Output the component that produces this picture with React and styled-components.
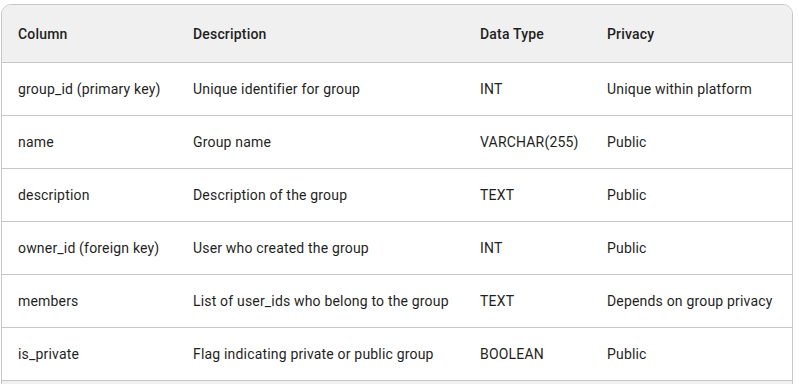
import React from 'react';
import styled, { createGlobalStyle } from 'styled-components';

const GlobalStyle = createGlobalStyle`
  body {
    margin: 0;
    background: #ffffff;
    font-family: Roboto, "Liberation Sans", sans-serif;
    overflow: hidden;
  }
`;

const Wrapper = styled.div`
  padding: 4px 6px 0 1px;
`;

const Frame = styled.div`
  border: 1px solid #c7c7c7;
  border-radius: 10px;
  overflow: hidden;
`;

const Table = styled.table`
  width: 100%;
  border-collapse: collapse;
  table-layout: fixed;
  font-size: 14px;
  letter-spacing: 0.18px;
  color: #1f1f1f;
`;

const Col = styled.col`
  width: ${(p) => p.$w}px;
`;

const HeadCell = styled.th`
  text-align: left;
  font-weight: 500;
  background: #f0f0f0;
  height: 57px;
  padding: 0 16px;
  border-bottom: 1px solid #c7c7c7;
`;

const Cell = styled.td`
  height: 52px;
  padding: 0 16px;
  border-bottom: 1px solid #c7c7c7;
  white-space: nowrap;
`;

const FillerRow = styled.tr`
  background: #f0f0f0;
  height: 40px;
`;

const columns = [
  { label: 'Column', w: 175 },
  { label: 'Description', w: 287 },
  { label: 'Data Type', w: 127 },
  { label: 'Privacy', w: 201 },
];

const rows = [
  ['group_id (primary key)', 'Unique identifier for group', 'INT', 'Unique within platform'],
  ['name', 'Group name', 'VARCHAR(255)', 'Public'],
  ['description', 'Description of the group', 'TEXT', 'Public'],
  ['owner_id (foreign key)', 'User who created the group', 'INT', 'Public'],
  ['members', 'List of user_ids who belong to the group', 'TEXT', 'Depends on group privacy'],
  ['is_private', 'Flag indicating private or public group', 'BOOLEAN', 'Public'],
];

const App = () => {
  return (
    <>
      <GlobalStyle />
      <Wrapper>
        <Frame>
          <Table>
            <colgroup>
              {columns.map((c) => (
                <Col key={c.label} $w={c.w} />
              ))}
            </colgroup>
            <thead>
              <tr>
                {columns.map((c) => (
                  <HeadCell key={c.label}>{c.label}</HeadCell>
                ))}
              </tr>
            </thead>
            <tbody>
              {rows.map((r) => (
                <tr key={r[0]}>
                  {r.map((v, i) => (
                    <Cell key={i}>{v}</Cell>
                  ))}
                </tr>
              ))}
              <FillerRow>
                <td colSpan={4} />
              </FillerRow>
            </tbody>
          </Table>
        </Frame>
      </Wrapper>
    </>
  );
};

export default App;
